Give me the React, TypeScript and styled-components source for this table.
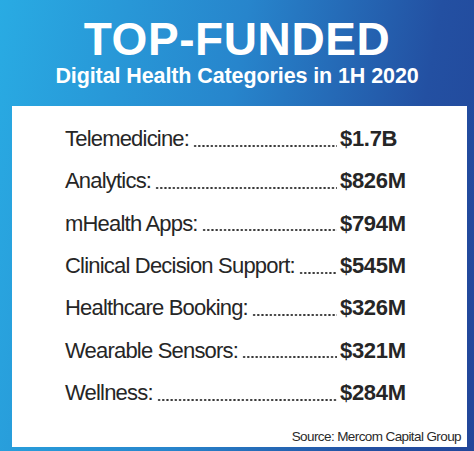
import React from "react";
import styled, { createGlobalStyle } from "styled-components";

const GlobalStyle = createGlobalStyle`
  html, body {
    margin: 0;
    padding: 0;
  }
  body {
    font-family: "Liberation Sans", Arial, sans-serif;
  }
`;

const categories = [
    { name: "Telemedicine:", amount: "$1.7B" },
    { name: "Analytics:", amount: "$826M" },
    { name: "mHealth Apps:", amount: "$794M" },
    { name: "Clinical Decision Support:", amount: "$545M" },
    { name: "Healthcare Booking:", amount: "$326M" },
    { name: "Wearable Sensors:", amount: "$321M" },
    { name: "Wellness:", amount: "$284M" },
] as { name: string; amount: string }[];

export default function App() {
    return (
        <>
            <GlobalStyle />
            <Poster>
                <Header>
                    <Title>TOP-FUNDED</Title>
                    <Subtitle>Digital Health Categories in 1H 2020</Subtitle>
                </Header>

                <Card>
                    <List>
                        {categories.map((c) => (
                            <Row key={c.name}>
                                <Label>{c.name}</Label>
                                <Leader />
                                <Amount>{c.amount}</Amount>
                            </Row>
                        ))}
                    </List>
                    <Source>Source: Mercom Capital Group</Source>
                </Card>
            </Poster>
        </>
    );
}

const Poster = styled.div`
    width: 474px;
    height: 451px;
    box-sizing: border-box;
    display: flex;
    flex-direction: column;
    padding: 16px 7px 4px 12px;
    background: linear-gradient(100deg, #29abe3 0%, #2785cc 45%, #2350a2 80%, #22469a 100%);
    overflow: hidden;
`;

const Header = styled.header`
    display: flex;
    flex-direction: column;
    align-items: center;
    color: #ffffff;
    margin-right: -7px;
    margin-left: -12px;
`;

const Title = styled.h1`
    margin: 0;
    font-size: 46px;
    line-height: 46px;
    font-weight: 700;
    letter-spacing: 0.6px;
`;

const Subtitle = styled.h2`
    margin: 3px 0 0;
    font-size: 21.5px;
    line-height: 22px;
    font-weight: 700;
    letter-spacing: -0.1px;
`;

const Card = styled.main`
    flex: 1;
    margin-top: 19px;
    background: #ffffff;
    display: flex;
    flex-direction: column;
    padding: 12px 6px 2px 53px;
`;

const List = styled.div`
    display: flex;
    flex-direction: column;
    width: 355px;
`;

const Row = styled.div`
    display: flex;
    align-items: baseline;
    height: 42.33px;
    line-height: 42.33px;
    color: #262626;
    font-size: 22px;
`;

const Label = styled.span`
    letter-spacing: -0.8px;
    white-space: nowrap;
`;

const Leader = styled.span`
    flex: 1;
    align-self: stretch;
    margin: 0 3px 0 4px;
    background-image: radial-gradient(circle, #333 0.9px, transparent 1.2px);
    background-size: 4.2px 4px;
    background-repeat: repeat-x;
    background-position: left bottom 12.6px;
`;

const Amount = styled.span`
    width: 80px;
    font-weight: 700;
    letter-spacing: -0.3px;
    white-space: nowrap;
`;

const Source = styled.div`
    margin-top: auto;
    align-self: flex-end;
    font-size: 13.5px;
    line-height: 16px;
    letter-spacing: -0.6px;
    color: #2a2a2a;
`;
